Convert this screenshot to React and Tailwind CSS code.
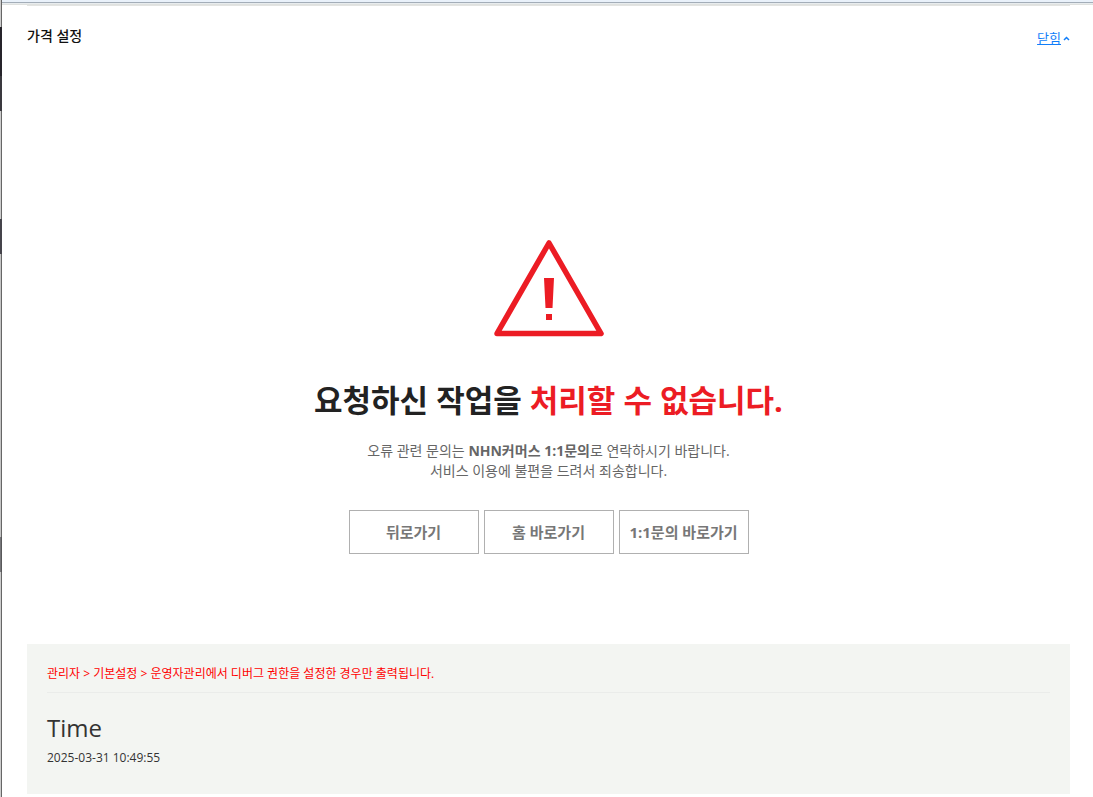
const actions = ["뒤로가기", "홈 바로가기", "1:1문의 바로가기"];

function PageEdge() {
  return (
    <div aria-hidden="true" className="flex w-[2px] shrink-0 flex-col">
      <div className="h-[27px] border-r border-[#666666] bg-[#cccccc]" />
      <div className="h-[49px] bg-[#26242b]" />
      <div className="h-[35px] bg-[#3a393f]" />
      <div className="h-[108px] border-r border-[#666666] bg-[#cccccc]" />
      <div className="h-[35px] bg-[#45444b]" />
      <div className="h-[283px] border-r border-[#666666] bg-[#c4c4c4]" />
      <div className="h-[35px] border-r border-[#58585a] bg-[#77777a]" />
      <div className="grow border-r border-[#666666] bg-[#cccccc]" />
    </div>
  );
}

function WarningIcon() {
  return (
    <svg width="110" height="97" viewBox="0 0 110 97" aria-hidden="true">
      <path
        d="M55 3 L107 93.500 H3 Z"
        fill="none"
        stroke="#ec1c24"
        strokeWidth="5.500"
        strokeLinejoin="round"
      />
      <path d="M50 38 H60 L58.500 68 H51.500 Z M52 74 H58 V80 H52 Z" fill="#ec1c24" />
    </svg>
  );
}

export default function App() {
  return (
    <div className="flex min-h-screen flex-col bg-white font-['Open_Sans','Noto_Sans_CJK_KR',sans-serif] text-[#333333]">
      <div className="flex grow">
        <PageEdge />
        <div className="flex min-w-0 grow flex-col">
          <div className="h-[2px] bg-[#e9f1fa]" />
          <div className="h-px bg-[#a3adb8]" />
          <div className="h-px bg-[#e8ecee]" />
          <div className="h-px bg-[#dfe1df]" />
          <main className="flex grow flex-col pr-[23px] pl-[25px]">
            <header className="flex h-[60px] items-start justify-between border-t border-[#e3e4e2] pt-5">
              <h1 className="text-[14px] leading-5 font-medium text-[#111111]">가격 설정</h1>
              <a href="#close" className="mt-[2px] flex items-center gap-[2px] text-[13px] leading-5 text-[#117ef9]">
                <span className="underline">닫힘</span>
                <svg width="7" height="5" viewBox="0 0 7 5" aria-hidden="true">
                  <path d="M1 4 L3.500 1.500 L6 4" fill="none" stroke="#117ef9" strokeWidth="1.500" />
                </svg>
              </a>
            </header>

            <section className="flex flex-col items-center pt-[175px] pb-[90px]">
              <WarningIcon />
              <h2 className="mt-[39px] text-[31px] leading-[48px] font-bold text-[#222222]">
                요청하신 작업을 <span className="text-[#ec1c24]">처리할 수 없습니다.</span>
              </h2>
              <p className="mt-[17px] text-center text-[14px] leading-5 text-[#666666]">
                오류 관련 문의는 <strong className="font-bold">NHN커머스 1:1문의</strong>로 연락하시기 바랍니다.
                <br />
                서비스 이용에 불편을 드려서 죄송합니다.
              </p>
              <div className="mt-[29px] flex gap-[5px]">
                {actions.map((label) => (
                  <button
                    key={label}
                    type="button"
                    className="h-[44px] w-[130px] border border-[#b0b0b0] bg-white text-[15px] font-bold whitespace-nowrap text-[#777777]"
                  >
                    {label}
                  </button>
                ))}
              </div>
            </section>

            <section className="mb-[3px] bg-[#f3f5f2] px-5 pt-5 pb-[27px]">
              <p className="border-b border-[#eaecea] pt-px pb-[9px] text-[12px] leading-[18px] text-[#ff0000]">
                관리자 &gt; 기본설정 &gt; 운영자관리에서 디버그 권한을 설정한 경우만 출력됩니다.
              </p>
              <h3 className="mt-[19px] text-[24px] leading-8">Time</h3>
              <time className="mt-[5px] block text-[12px] leading-[18px]">2025-03-31 10:49:55</time>
            </section>
          </main>
        </div>
      </div>
    </div>
  );
}
